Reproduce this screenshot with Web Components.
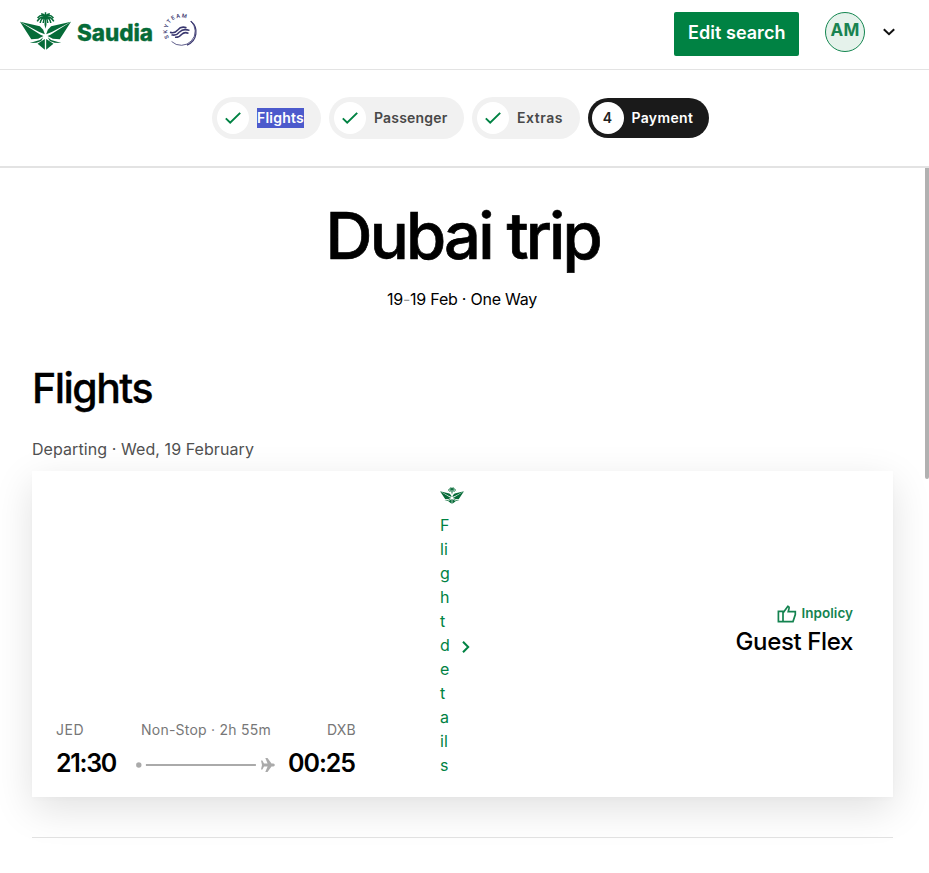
<!DOCTYPE html>
<html lang="en">
<head>
<meta charset="utf-8">
<title>Dubai trip</title>
<style>
html,body{margin:0;height:100%;overflow:hidden;background:#fff}
body{font-family:Inter,"Liberation Sans",sans-serif;color:#000}
</style>
</head>
<body>
<trip-app></trip-app>
<script>
function define(name, html, after) {
  const t = document.createElement('template');
  t.innerHTML = html;
  customElements.define(name, class extends HTMLElement {
    connectedCallback() {
      if (this.shadowRoot) return;
      this.attachShadow({mode: 'open'}).append(t.content.cloneNode(true));
      if (after) after.call(this, this.shadowRoot);
    }
  });
}

// Text tracked so that its line takes the width given in the "w" attribute.
define('fit-text', `<style>:host{display:block;white-space:nowrap;flex:none}span{display:inline-block}</style><span><slot></slot></span>`, function (root) {
  const w = parseFloat(this.getAttribute('w'));
  const s = root.querySelector('span');
  const n = this.textContent.length;
  this.style.width = w + 'px';
  s.style.letterSpacing = ((w - s.getBoundingClientRect().width) / n).toFixed(3) + 'px';
});

define('palm-emblem', `<style>:host{display:block;flex:none;color:#066b38}svg{display:block;width:100%;height:100%}</style>
<svg viewBox="0 0 154 114" fill="currentColor" preserveAspectRatio="none">
<path d="M0 29L60 43L70 53L75 67L58 60Z"/><path d="M0 29L62 68L71 72L55 80L34 82Z"/>
<path d="M154 29L94 43L84 53L79 67L96 60Z"/><path d="M154 29L92 68L83 72L99 80L120 82Z"/>
<path d="M29 93L60 84L70 76L64 87L50 92Z"/><path d="M125 93L94 84L84 76L90 87L104 92Z"/>
<path d="M75 81V113L53 95L69 85ZM79 81V113L101 95L85 85Z"/>
<path d="M75 14H79L80 38L77 50L74 38Z"/>
<path d="M77 14Q60 13 52 28M77 15Q63 18 61 33M77 15Q70 22 70 33M77 14Q94 13 102 28M77 15Q91 18 93 33M77 15Q84 22 84 33M77 13Q64 5 53 18M77 13Q90 5 101 18M77 13Q71 5 64 5M77 13Q83 5 90 5M77 14V1" fill="none" stroke="currentColor" stroke-width="4.6"/>
</svg>`);

define('brand-logo', `<style>
:host{display:flex;align-items:flex-start}
palm-emblem{width:51px;height:38px;margin-top:12px}
fit-text{margin:18px 0 0 6px;font:800 22.5px/30px Inter,sans-serif;color:#066b38;-webkit-text-stroke:.3px #066b38}
svg{width:36px;height:36px;margin:13px 0 0 8px;overflow:visible}
</style>
<palm-emblem></palm-emblem><fit-text w="76">Saudia</fit-text>
<svg viewBox="0 0 36 36" fill="none" stroke="#39376f">
<defs><path id="arc" d="M8 25A13.8 13.8 0 0 1 28.9 7.7"/></defs>
<text fill="#39376f" stroke="none" font-family="Inter,sans-serif" font-size="5.4" font-weight="600"><textPath href="#arc" textLength="34">SKYTEAM</textPath></text>
<path d="M29.8 8.1A14 14 0 0 1 26 32.1" stroke-width="1.2"/><path d="M29.8 8.1A14 14 0 0 1 10.6 28.5" stroke-width=".8"/>
<path d="M9 19.2Q13.5 21 17 16.8Q20 12.8 25.5 14.8M10.5 21.7Q15 23.3 18.6 18.9Q22 15.3 28.5 17.4M14 24.3Q18 24.7 20.5 21.5Q23.5 18.4 27.5 20.4" stroke-width="1.5"/>
</svg>`);

define('app-header', `<style>
:host{display:flex;height:69px;border-bottom:1px solid #e3e3e3;padding:0 34px 0 20px;align-items:flex-start}
.gap{flex:1}
button{font:600 18px/42px Inter,sans-serif;color:#fff;background:#008243;border:0;border-radius:2px;width:125px;height:44px;margin:12px 26px 0 0;padding:0 0 2px 14px;text-align:left;box-sizing:border-box}
.av{box-sizing:border-box;width:40px;height:40px;border:1px solid #148650;border-radius:50%;background:#e5f2eb;color:#188350;display:flex;justify-content:center;margin-top:12px;font:700 17px/35px Inter,sans-serif}
svg{width:12px;height:8px;margin:28px 0 0 18px}
</style>
<brand-logo></brand-logo><div class="gap"></div>
<button><fit-text w="97.5">Edit search</fit-text></button>
<div class="av"><fit-text w="29">AM</fit-text></div>
<svg viewBox="0 0 12 8" fill="none" stroke="#111" stroke-width="2"><path d="M.8 1.2L6 6.2L11.2 1.2"/></svg>`);

define('trip-step', `<style>
:host{display:flex;align-items:center;box-sizing:border-box;height:42px;border-radius:21px;background:#f1f1f1;padding-left:5px;font:600 14px/20px Inter,sans-serif;color:#484848}
:host([current]){height:40px;background:#1a1a1a;color:#fff;padding-left:4px}
.c{width:32px;height:32px;border-radius:50%;background:#fff;display:flex;align-items:center;justify-content:center;margin-right:8px;color:#222;line-height:30px}
:host([current]) .c{margin-right:7.4px}
:host([current]) svg,:host(:not([current])) b{display:none}
b{font-weight:600;margin-top:-1px;margin-right:1px}
svg{width:16px;height:12px}
.l{margin-top:-1px}
:host([marked]) .l{background:#4c5acc;color:#fff}
</style><div class="c"><svg viewBox="0 0 16 12" fill="none" stroke="#008243" stroke-width="2"><path d="M.8 6.4L5.2 10.6L15.2.9"/></svg><b><slot name="n"></slot></b></div><div class="l"><slot></slot></div>`);

define('trip-steps', `<style>
:host{display:flex;align-items:center;gap:8px;height:96px;padding-left:212px;border-bottom:2px solid #e3e3e3}
</style>
<trip-step marked style="width:109px"><fit-text w="47">Flights</fit-text></trip-step>
<trip-step style="width:135px"><fit-text w="73.5">Passenger</fit-text></trip-step>
<trip-step style="width:108px"><fit-text w="46">Extras</fit-text></trip-step>
<trip-step current style="width:121px"><span slot="n">4</span><fit-text w="62">Payment</fit-text></trip-step>`);

define('flight-leg', `<style>
:host{display:flex;flex-direction:column;gap:7.5px;width:300px;margin-bottom:-.5px}
div{display:flex}
.a{font:400 14px/20px Inter,sans-serif;color:#777}
.b{font:600 25px/30px Inter,sans-serif}
svg{width:140px;height:16px;margin:9.5px 12px 0 20px}
</style>
<div class="a"><fit-text w="28">JED</fit-text><fit-text w="130" style="margin:0 56px 0 57px">Non-Stop · 2h 55m</fit-text><fit-text w="29">DXB</fit-text></div>
<div class="b"><fit-text w="60">21:30</fit-text><svg viewBox="0 0 140 16" fill="#aaa"><circle cx="2.8" cy="8" r="2.7"/><path d="M9.9 7h110v2h-110z"/><path d="M125 3.5h1.4L128 6.6h3.6L129.3 1h2.2l4 5.6h1.8q1.5.3 1.5 1.4t-1.5 1.4h-1.8L131.5 15H129.3l2.3-5.6H128l-1.6 3.1H125L126 8z"/></svg><fit-text w="67">00:25</fit-text></div>`);

define('flight-details', `<style>
:host{display:block;width:40px}
palm-emblem{width:24px;height:17px;margin-bottom:9px}
.r{display:flex;align-items:center;color:#008243}
.t{width:10px;font:400 16px/24px Inter,sans-serif;word-break:break-all}
svg{width:9px;height:12px;margin:4px 0 0 11px}
</style>
<palm-emblem></palm-emblem>
<div class="r"><div class="t">Flight details</div><svg viewBox="0 0 9 12" fill="none" stroke="#008243" stroke-width="2"><path d="M2 .8L7.2 6L2 11.2"/></svg></div>`);

define('fare-info', `<style>
:host{display:flex;flex-direction:column;align-items:flex-end;gap:4px}
.p{display:flex;color:#148350;font:600 13.5px/20px Inter,sans-serif}
svg{width:20px;height:18px;margin:2px 5px 0 0}
.g{font:500 24px/30px Inter,sans-serif}
</style>
<div class="p"><svg viewBox="0 0 20 18" fill="none" stroke="#148350" stroke-width="1.7"><path d="M1.4 6.4H6V16.6H1.4ZM6 8L10.9 1.3Q12.5 1.7 12 3.6L11.2 6.7H18.3V9.6L16 16.6H6"/></svg><fit-text w="51.5">Inpolicy</fit-text></div>
<div class="g"><fit-text w="117.5">Guest Flex</fit-text></div>`);

define('flight-card', `<style>
:host{display:flex;box-sizing:border-box;height:326px;background:#fff;padding:16px 40px 20px 24px;box-shadow:0 12px 38px rgba(0,0,0,.12),0 2px 4px rgba(0,0,0,.02)}
flight-leg{align-self:flex-end}
flight-details{margin-left:84px}
fare-info{margin-left:auto;align-self:flex-start;margin-top:116px}
</style><flight-leg></flight-leg><flight-details></flight-details><fare-info></fare-info>`);

define('trip-app', `<style>
:host{display:block;height:873px;overflow:hidden}
.body{display:flex}
main{flex:1;padding:29px 32px 0;height:705px;box-sizing:border-box}
.bar{width:4px;height:311px;background:#b1b1b1;border-radius:0 0 2px 2px}
h1,h2,p{margin:0}
h1{font:500 65px/78px Inter,sans-serif;padding-left:293.5px;-webkit-text-stroke:.7px #000}
.sub{font:400 16px/24px Inter,sans-serif;margin-top:12px;padding-left:355px}
.sub i{font-style:normal;color:#999}
h2{font:500 41px/50px Inter,sans-serif;margin-top:52px;-webkit-text-stroke:.3px #000}
.dep{font:400 16px/24px Inter,sans-serif;margin:24px 0 10px;color:#505050}
hr{border:0;border-top:1px solid #e1e1e1;margin:40px 0 0}
</style>
<app-header></app-header><trip-steps></trip-steps>
<div class="body"><main>
<h1><fit-text w="274.5">Dubai trip</fit-text></h1>
<p class="sub"><fit-text w="150">19<i>-</i>19 Feb · One Way</fit-text></p>
<h2><fit-text w="120">Flights</fit-text></h2>
<p class="dep"><fit-text w="222">Departing · Wed, 19 February</fit-text></p>
<flight-card></flight-card><hr>
</main><div class="bar"></div></div>`);
</script>
</body>
</html>
